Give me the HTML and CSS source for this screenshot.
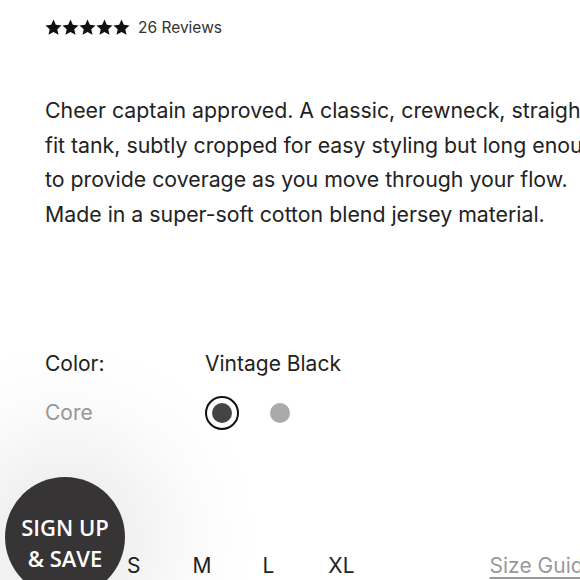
FILE: index.html
```html
<!DOCTYPE html>
<html>
<head>
<meta charset="utf-8">
<link rel="stylesheet" href="styles.css">
</head>
<body>
<div class="page">
  <div class="rating">
    <div class="stars">
      <svg viewBox="0 0 24 24" class="star"><path d="M12 0.8l3.3 7.4 8.1.8-6.1 5.4 1.8 8L12 18.3l-7.1 4.1 1.8-8L0.6 9l8.1-.8z"/></svg>
      <svg viewBox="0 0 24 24" class="star"><path d="M12 0.8l3.3 7.4 8.1.8-6.1 5.4 1.8 8L12 18.3l-7.1 4.1 1.8-8L0.6 9l8.1-.8z"/></svg>
      <svg viewBox="0 0 24 24" class="star"><path d="M12 0.8l3.3 7.4 8.1.8-6.1 5.4 1.8 8L12 18.3l-7.1 4.1 1.8-8L0.6 9l8.1-.8z"/></svg>
      <svg viewBox="0 0 24 24" class="star"><path d="M12 0.8l3.3 7.4 8.1.8-6.1 5.4 1.8 8L12 18.3l-7.1 4.1 1.8-8L0.6 9l8.1-.8z"/></svg>
      <svg viewBox="0 0 24 24" class="star"><path d="M12 0.8l3.3 7.4 8.1.8-6.1 5.4 1.8 8L12 18.3l-7.1 4.1 1.8-8L0.6 9l8.1-.8z"/></svg>
    </div>
    <span class="reviews">26 Reviews</span>
  </div>

  <p class="desc">Cheer captain approved. A classic, crewneck, straight-<br>fit tank, subtly cropped for easy styling but long enough<br>to provide coverage as you move through your flow.<br>Made in a super-soft cotton blend jersey material.</p>

  <div class="color-row">
    <span class="label">Color:</span>
    <span class="value">Vintage Black</span>
  </div>
  <div class="swatch-row">
    <span class="label muted">Core</span>
    <div class="swatches">
      <span class="swatch selected"><span class="dot dark"></span></span>
      <span class="swatch"><span class="dot grey"></span></span>
    </div>
  </div>

  <div class="sizes">
    <span class="size s">S</span>
    <span class="size">M</span>
    <span class="size">L</span>
    <span class="size">XL</span>
    <a class="guide">Size Guide</a>
  </div>
</div>
<div class="badge">SIGN UP<br>&amp; SAVE</div>
</body>
</html>
```
FILE: styles.css
```css
html, body {
  margin: 0;
  padding: 0;
  background: #fff;
  overflow: hidden;
  width: 580px;
  height: 580px;
}
body {
  font-family: Inter, "Liberation Sans", sans-serif;
  color: #222;
}
.page {
  padding: 18px 0 0 45px;
  width: 700px;
}
.rating {
  display: flex;
  align-items: center;
  height: 18px;
}
.stars {
  display: flex;
  gap: 0;
}
.star {
  width: 17px;
  height: 17px;
  fill: #111;
}
.reviews {
  margin-left: 8px;
  font-size: 15.5px;
  color: #333;
}
.desc {
  margin: 57px 0 0;
  font-size: 21.3px;
  line-height: 34.7px;
  color: #222;
  white-space: nowrap;
}
.color-row, .swatch-row {
  display: flex;
  align-items: center;
}
.color-row {
  margin-top: 117px;
  height: 30px;
}
.swatch-row {
  margin-top: 17px;
  height: 34px;
}
.label {
  width: 160px;
  font-size: 21px;
}
.value {
  font-size: 21px;
}
.muted {
  color: #999;
}
.swatches {
  display: flex;
  align-items: center;
  gap: 24px;
}
.swatch {
  width: 34px;
  height: 34px;
  box-sizing: border-box;
  border-radius: 50%;
  display: flex;
  align-items: center;
  justify-content: center;
}
.swatch.selected {
  border: 2px solid #111;
}
.dot {
  width: 20px;
  height: 20px;
  border-radius: 50%;
}
.dot.dark { background: #444; }
.dot.grey { background: #aaa; }
.sizes {
  margin-top: 121px;
  display: flex;
  align-items: center;
  font-size: 21px;
  height: 30px;
}
.size {
  color: #222;
}
.size.s { margin-left: 82px; }
.size:nth-child(2) { margin-left: 52px; }
.size:nth-child(3) { margin-left: 51px; }
.size:nth-child(4) { margin-left: 54px; }
.guide {
  margin-left: 135px;
  color: #999;
  text-decoration: underline;
  text-underline-offset: 4px;
}
.badge {
  position: absolute;
  left: 5px;
  top: 477px;
  width: 120px;
  height: 120px;
  border-radius: 50%;
  background: #363435;
  color: #fff;
  font-family: "Open Sans", "Liberation Sans", sans-serif;
  font-weight: 600;
  font-size: 22px;
  line-height: 31px;
  text-align: center;
  box-sizing: border-box;
  padding-top: 35px;
  box-shadow: 0 0 120px 35px rgba(0,0,0,0.1);
}
```
